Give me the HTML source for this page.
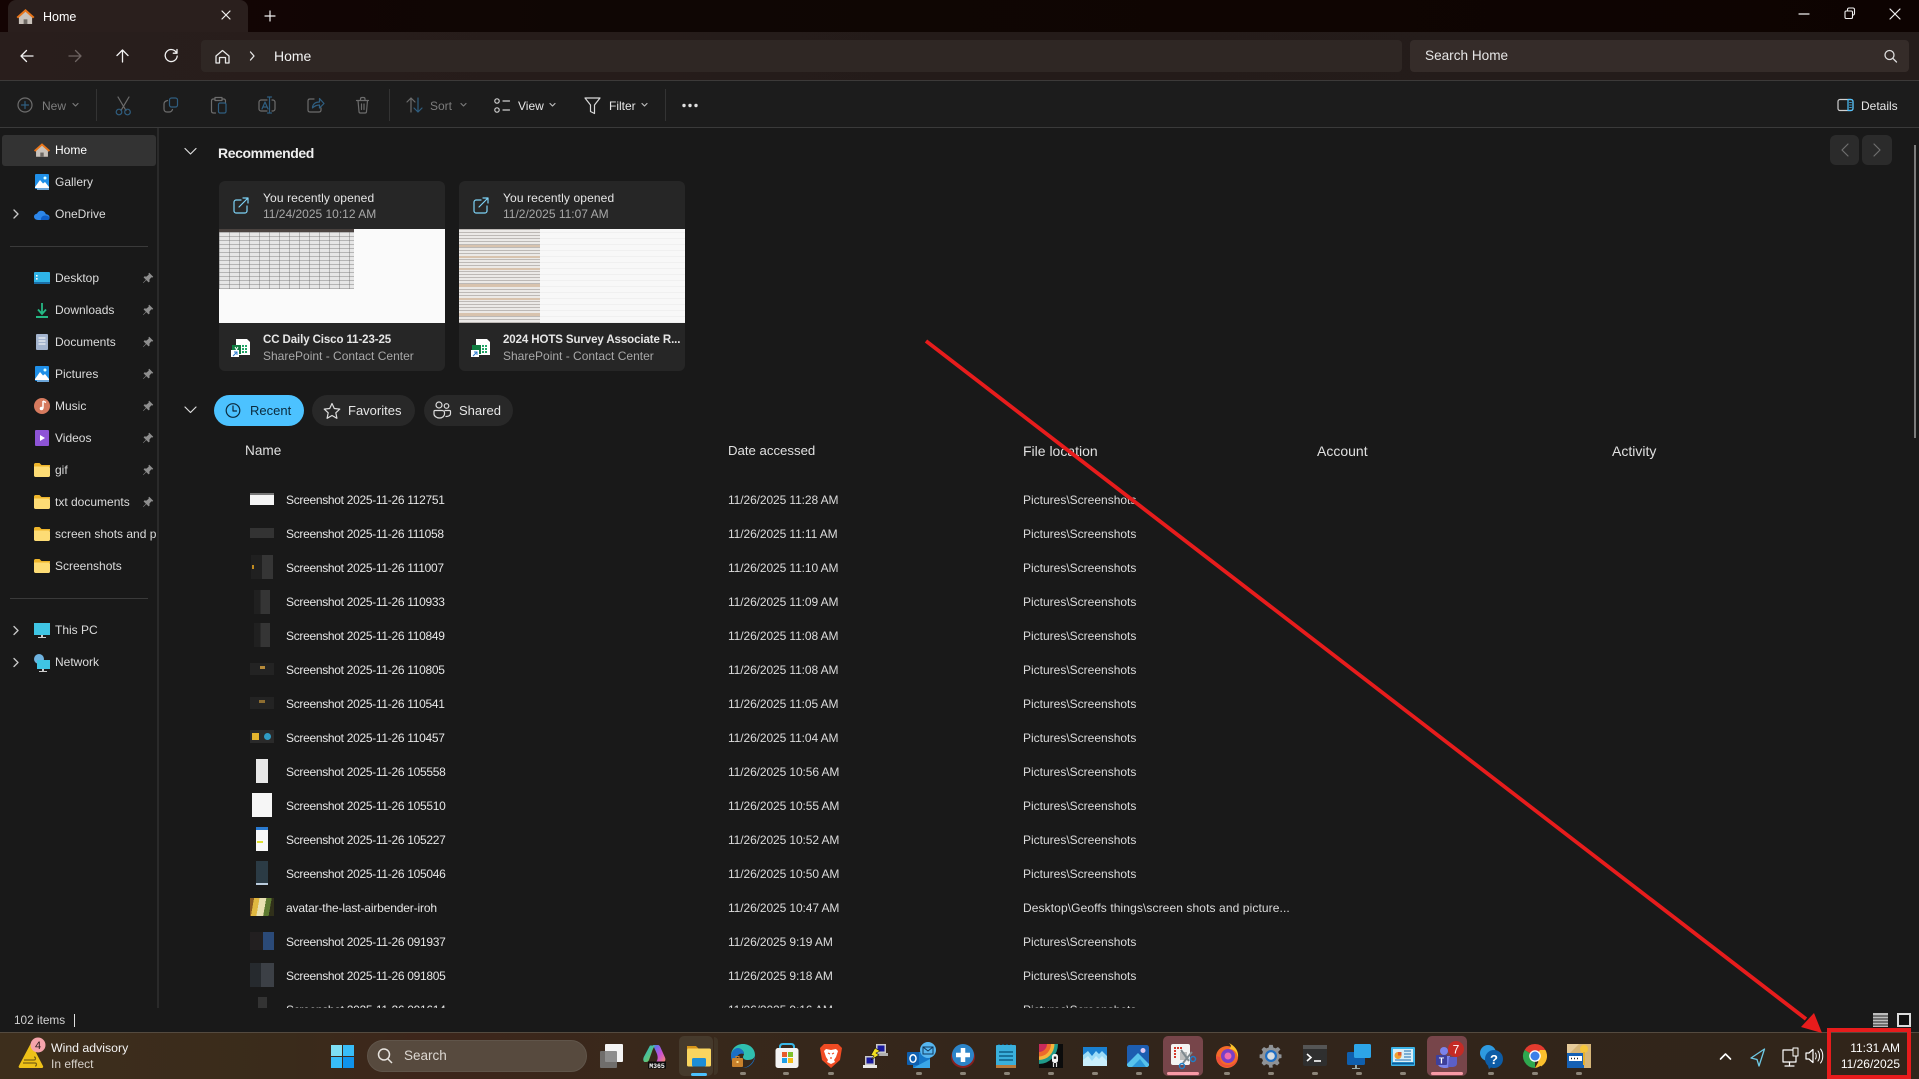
<!DOCTYPE html>
<html lang="en"><head><meta charset="utf-8"><title>Home - File Explorer</title>
<style>
html,body{margin:0;padding:0;background:#191919}
#r{position:relative;width:1919px;height:1079px;overflow:hidden;background:#191919;font-family:"Liberation Sans",sans-serif;font-size:12px;letter-spacing:0;color:#e6e6e6}
.b{position:absolute}
.t{position:absolute;height:16px;line-height:16px;white-space:nowrap}
.d{color:#7d7d7d;font-size:12px;letter-spacing:0}
.s{color:#dcdcdc}
.g{color:#a8a8a8}
#list{position:absolute;left:0;top:480px;width:1919px;height:528px;overflow:hidden}
#list .t{letter-spacing:-.3px}
#list .s{letter-spacing:0}
#list [style*="left:728px"]{letter-spacing:-.1px}
svg{position:absolute;left:0;top:0}
</style></head><body><div id="r">
<div class="b" style="left:0;top:0;width:1919px;height:32px;background:linear-gradient(90deg,#140403 0,#0f0604 30%,#0f0502 70%,#0d0301 100%)"></div>
<div class="b" style="left:0;top:32px;width:1919px;height:48px;background:linear-gradient(90deg,#291e1c,#241b19 50%,#241c1a)"></div>
<div class="b" style="left:8px;top:0;width:240px;height:32px;background:#2a1f1d;border-radius:8px 8px 0 0"></div>
<div class="b" style="left:201px;top:40px;width:1201px;height:32px;background:#2f2724;border-radius:4px"></div>
<div class="b" style="left:1410px;top:40px;width:499px;height:32px;background:#352c29;border-radius:4px"></div>
<div class="b" style="left:0;top:80px;width:1919px;height:48px;background:#1c1c1c;border-top:1px solid #3c3a39;border-bottom:1px solid #3a3a3a;box-sizing:border-box"></div>
<div class="b" style="left:96px;top:89px;width:1px;height:32px;background:#333"></div>
<div class="b" style="left:389px;top:89px;width:1px;height:32px;background:#333"></div>
<div class="b" style="left:665px;top:89px;width:1px;height:32px;background:#333"></div>
<div class="b" style="left:157px;top:128px;width:2px;height:880px;background:#2a2a2a"></div>
<div class="b" style="left:2px;top:135px;width:154px;height:31px;background:#333;border-radius:3px"></div>
<div class="b" style="left:10px;top:246px;width:138px;height:1px;background:#3a3a3a"></div>
<div class="b" style="left:10px;top:598px;width:138px;height:1px;background:#3a3a3a"></div>

<div class="t" style="left:43px;top:9px;font-size:12.5px;letter-spacing:0;font-weight:400;color:#fff">Home</div>
<div class="t" style="left:274px;top:48px;font-size:14px;letter-spacing:0;color:#f2f2f2">Home</div>
<div class="t" style="left:1425px;top:48px;font-size:13.6px;letter-spacing:0;color:#e6e6e6">Search Home</div>
<div class="t d" style="left:42px;top:98px">New</div>
<div class="t d" style="left:430px;top:98px">Sort</div>
<div class="t" style="left:518px;top:98px;font-size:12px;letter-spacing:0;color:#e6e6e6">View</div>
<div class="t" style="left:609px;top:98px;font-size:12px;letter-spacing:0;color:#e6e6e6">Filter</div>
<div class="t" style="left:1861px;top:98px;font-size:12px;letter-spacing:0;color:#e6e6e6">Details</div>

<div class="t s" style="left:55px;top:142px;color:#fff">Home</div>
<div class="t s" style="left:55px;top:174px">Gallery</div>
<div class="t s" style="left:55px;top:206px">OneDrive</div>
<div class="t s" style="left:55px;top:270px">Desktop</div>
<div class="t s" style="left:55px;top:302px">Downloads</div>
<div class="t s" style="left:55px;top:334px">Documents</div>
<div class="t s" style="left:55px;top:366px">Pictures</div>
<div class="t s" style="left:55px;top:398px">Music</div>
<div class="t s" style="left:55px;top:430px">Videos</div>
<div class="t s" style="left:55px;top:462px">gif</div>
<div class="t s" style="left:55px;top:494px">txt documents</div>
<div class="t s" style="left:55px;top:526px;width:101px;overflow:hidden">screen shots and pictures</div>
<div class="t s" style="left:55px;top:558px">Screenshots</div>
<div class="t s" style="left:55px;top:622px">This PC</div>
<div class="t s" style="left:55px;top:654px">Network</div>

<div class="t" style="left:218px;top:145px;font-size:14px;letter-spacing:-.4px;font-weight:700;color:#eee">Recommended</div>
<div class="b" style="left:219px;top:181px;width:226px;height:190px;background:#262626;border-radius:6px"></div>
<div class="b" style="left:459px;top:181px;width:226px;height:190px;background:#262626;border-radius:6px"></div>
<div class="t" style="left:263px;top:190px;letter-spacing:.12px;color:#e6e6e6">You recently opened</div>
<div class="t g" style="left:263px;top:206px">11/24/2025 10:12 AM</div>
<div class="t" style="left:503px;top:190px;letter-spacing:.12px;color:#e6e6e6">You recently opened</div>
<div class="t g" style="left:503px;top:206px">11/2/2025 11:07 AM</div>
<div class="b" style="left:219px;top:229px;width:226px;height:94px;background:#fafafa"></div>
<div class="b" style="left:219px;top:229px;width:135px;height:60px;background:repeating-linear-gradient(0deg,#b4b4b4 0 1px,#e6e6e6 1px 4px)"></div>
<div class="b" style="left:219px;top:229px;width:135px;height:60px;background:repeating-linear-gradient(90deg,rgba(110,110,110,.4) 0 1px,rgba(255,255,255,0) 1px 10px)"></div>
<div class="b" style="left:219px;top:229px;width:135px;height:3px;background:#4a4340"></div>
<div class="b" style="left:459px;top:229px;width:226px;height:94px;background:#f8f8f8"></div>
<div class="b" style="left:540px;top:229px;width:145px;height:94px;background:repeating-linear-gradient(0deg,#f0f0f0 0 1px,rgba(0,0,0,0) 1px 6px)"></div>
<div class="b" style="left:459px;top:229px;width:81px;height:94px;background:repeating-linear-gradient(0deg,#bdb9b6 0 1px,#ebe9e7 1px 3px)"></div>
<div class="b" style="left:459px;top:245px;width:81px;height:2px;background:#d8c3ae"></div>
<div class="b" style="left:459px;top:256px;width:81px;height:2px;background:#d8c3ae"></div>
<div class="b" style="left:459px;top:268px;width:81px;height:2px;background:#d8c3ae"></div>
<div class="b" style="left:459px;top:284px;width:81px;height:3px;background:#d8c3ae"></div>
<div class="b" style="left:459px;top:298px;width:81px;height:2px;background:#d8c3ae"></div>
<div class="b" style="left:459px;top:313px;width:81px;height:3px;background:#d8c3ae"></div>
<div class="t" style="left:263px;top:332px;font-weight:700;letter-spacing:-.1px;font-size:11.5px;color:#e6e6e6">CC Daily Cisco 11-23-25</div>
<div class="t g" style="left:263px;top:348px">SharePoint - Contact Center</div>
<div class="t" style="left:503px;top:332px;font-weight:700;letter-spacing:-.1px;font-size:11.5px;color:#e6e6e6;width:180px;overflow:hidden">2024 HOTS Survey Associate R...</div>
<div class="t g" style="left:503px;top:348px">SharePoint - Contact Center</div>

<div class="b" style="left:214px;top:395px;width:90px;height:31px;background:#4cc2ff;border-radius:16px"></div>
<div class="b" style="left:312px;top:395px;width:103px;height:31px;background:#282828;border-radius:16px"></div>
<div class="b" style="left:424px;top:395px;width:89px;height:31px;background:#282828;border-radius:16px"></div>
<div class="t" style="left:250px;top:403px;font-size:13px;letter-spacing:0;color:#0a2a3c">Recent</div>
<div class="t" style="left:348px;top:403px;font-size:13px;letter-spacing:0;color:#e6e6e6">Favorites</div>
<div class="t" style="left:459px;top:403px;font-size:13px;letter-spacing:0;color:#e6e6e6">Shared</div>

<div class="t" style="left:245px;top:443px;font-size:13.6px;letter-spacing:0;color:#e0e0e0">Name</div>
<div class="t" style="left:728px;top:443px;font-size:13.2px;letter-spacing:0;color:#e0e0e0">Date accessed</div>
<div class="t" style="left:1023px;top:443px;font-size:14px;letter-spacing:0;color:#e0e0e0">File location</div>
<div class="t" style="left:1317px;top:443px;font-size:14px;letter-spacing:0;color:#e0e0e0">Account</div>
<div class="t" style="left:1612px;top:443px;font-size:14px;letter-spacing:0;color:#e0e0e0">Activity</div>

<div id="list">
<div class="b" style="left:250px;top:13px;width:24px;height:12px;background:#f4f4f4"></div><div class="b" style="left:250px;top:13px;width:24px;height:2px;background:#777"></div><div class="t" style="left:286px;top:12px">Screenshot 2025-11-26 112751</div><div class="t s" style="left:728px;top:12px">11/26/2025 11:28 AM</div><div class="t s" style="left:1023px;top:12px">Pictures\Screenshots</div>
<div class="b" style="left:250px;top:48px;width:24px;height:10px;background:#333"></div><div class="t" style="left:286px;top:46px">Screenshot 2025-11-26 111058</div><div class="t s" style="left:728px;top:46px">11/26/2025 11:11 AM</div><div class="t s" style="left:1023px;top:46px">Pictures\Screenshots</div>
<div class="b" style="left:251px;top:75px;width:22px;height:24px;background:linear-gradient(90deg,#202020 50%,#353535 50%)"></div><div class="b" style="left:252px;top:85px;width:2px;height:4px;background:#c08a20"></div><div class="t" style="left:286px;top:80px">Screenshot 2025-11-26 111007</div><div class="t s" style="left:728px;top:80px">11/26/2025 11:10 AM</div><div class="t s" style="left:1023px;top:80px">Pictures\Screenshots</div>
<div class="b" style="left:254px;top:110px;width:16px;height:24px;background:linear-gradient(90deg,#202020 40%,#353535 40%)"></div><div class="t" style="left:286px;top:114px">Screenshot 2025-11-26 110933</div><div class="t s" style="left:728px;top:114px">11/26/2025 11:09 AM</div><div class="t s" style="left:1023px;top:114px">Pictures\Screenshots</div>
<div class="b" style="left:254px;top:143px;width:16px;height:24px;background:linear-gradient(90deg,#202020 40%,#353535 40%)"></div><div class="t" style="left:286px;top:148px">Screenshot 2025-11-26 110849</div><div class="t s" style="left:728px;top:148px">11/26/2025 11:08 AM</div><div class="t s" style="left:1023px;top:148px">Pictures\Screenshots</div>
<div class="b" style="left:250px;top:183px;width:24px;height:12px;background:#232323"></div><div class="b" style="left:260px;top:186px;width:5px;height:3px;background:#b58a3a"></div><div class="t" style="left:286px;top:182px">Screenshot 2025-11-26 110805</div><div class="t s" style="left:728px;top:182px">11/26/2025 11:08 AM</div><div class="t s" style="left:1023px;top:182px">Pictures\Screenshots</div>
<div class="b" style="left:250px;top:217px;width:24px;height:12px;background:#232323"></div><div class="b" style="left:259px;top:220px;width:6px;height:3px;background:#8d6d30"></div><div class="t" style="left:286px;top:216px">Screenshot 2025-11-26 110541</div><div class="t s" style="left:728px;top:216px">11/26/2025 11:05 AM</div><div class="t s" style="left:1023px;top:216px">Pictures\Screenshots</div>
<div class="b" style="left:250px;top:250px;width:24px;height:13px;background:#2a2a2a"></div><div class="b" style="left:252px;top:253px;width:7px;height:7px;background:#e6b62e"></div><div class="b" style="left:264px;top:253px;width:7px;height:7px;background:#2f9bc4;border-radius:50%"></div><div class="t" style="left:286px;top:250px">Screenshot 2025-11-26 110457</div><div class="t s" style="left:728px;top:250px">11/26/2025 11:04 AM</div><div class="t s" style="left:1023px;top:250px">Pictures\Screenshots</div>
<div class="b" style="left:256px;top:279px;width:12px;height:24px;background:#e8e8e8"></div><div class="t" style="left:286px;top:284px">Screenshot 2025-11-26 105558</div><div class="t s" style="left:728px;top:284px">11/26/2025 10:56 AM</div><div class="t s" style="left:1023px;top:284px">Pictures\Screenshots</div>
<div class="b" style="left:252px;top:313px;width:20px;height:24px;background:#f6f6f6"></div><div class="t" style="left:286px;top:318px">Screenshot 2025-11-26 105510</div><div class="t s" style="left:728px;top:318px">11/26/2025 10:55 AM</div><div class="t s" style="left:1023px;top:318px">Pictures\Screenshots</div>
<div class="b" style="left:256px;top:347px;width:12px;height:24px;background:#f8f8f8"></div><div class="b" style="left:256px;top:347px;width:12px;height:3px;background:#2a7ad0"></div><div class="b" style="left:257px;top:361px;width:6px;height:2px;background:#dfe030"></div><div class="t" style="left:286px;top:352px">Screenshot 2025-11-26 105227</div><div class="t s" style="left:728px;top:352px">11/26/2025 10:52 AM</div><div class="t s" style="left:1023px;top:352px">Pictures\Screenshots</div>
<div class="b" style="left:256px;top:381px;width:12px;height:24px;background:#2b3b45"></div><div class="b" style="left:256px;top:403px;width:12px;height:2px;background:#bcd"></div><div class="t" style="left:286px;top:386px">Screenshot 2025-11-26 105046</div><div class="t s" style="left:728px;top:386px">11/26/2025 10:50 AM</div><div class="t s" style="left:1023px;top:386px">Pictures\Screenshots</div>
<div class="b" style="left:250px;top:418px;width:24px;height:18px;background:linear-gradient(100deg,#8a5a20 0 15%,#e0b840 15% 35%,#e8e0b0 35% 60%,#5d7a30 60% 80%,#30301a 80%)"></div><div class="t" style="left:286px;top:420px;letter-spacing:-.15px">avatar-the-last-airbender-iroh</div><div class="t s" style="left:728px;top:420px">11/26/2025 10:47 AM</div><div class="t s" style="left:1023px;top:420px;letter-spacing:.1px">Desktop\Geoffs things\screen shots and picture...</div>
<div class="b" style="left:250px;top:452px;width:24px;height:18px;background:linear-gradient(90deg,#221f20 55%,#2b4a78 55%)"></div><div class="t" style="left:286px;top:454px">Screenshot 2025-11-26 091937</div><div class="t s" style="left:728px;top:454px">11/26/2025 9:19 AM</div><div class="t s" style="left:1023px;top:454px">Pictures\Screenshots</div>
<div class="b" style="left:250px;top:483px;width:24px;height:24px;background:linear-gradient(90deg,#262a2e 45%,#3c4046 45%)"></div><div class="t" style="left:286px;top:488px">Screenshot 2025-11-26 091805</div><div class="t s" style="left:728px;top:488px">11/26/2025 9:18 AM</div><div class="t s" style="left:1023px;top:488px">Pictures\Screenshots</div>
<div class="b" style="left:258px;top:517px;width:9px;height:24px;background:#333"></div><div class="t" style="left:286px;top:522px">Screenshot 2025-11-26 091614</div><div class="t s" style="left:728px;top:522px">11/26/2025 9:16 AM</div><div class="t s" style="left:1023px;top:522px">Pictures\Screenshots</div>
</div>

<div class="t" style="left:14px;top:1012px;font-size:11.8px;color:#d2d2d2">102 items</div>
<div class="b" style="left:74px;top:1014px;width:1px;height:13px;background:#e0e0e0"></div>

<div class="b" style="left:0;top:1032px;width:1919px;height:47px;box-sizing:border-box;border-top:1px solid #544a3f;background:linear-gradient(90deg,#3d2e1c 0,#3a2b1b 15%,#3d261b 22%,#38281b 35%,#32251b 60%,#31251a 100%)"></div>
<div class="b" style="left:367px;top:1040px;width:220px;height:32px;background:#574a3e;border-radius:16px;box-sizing:border-box;border:1px solid #60554a"></div>
<div class="b" style="left:679px;top:1036px;width:34px;height:40px;background:#463a2c;border-radius:5px"></div>
<div class="b" style="left:714px;top:1037px;width:4px;height:38px;background:#403426;border-radius:0 4px 4px 0"></div>
<div class="b" style="left:1163px;top:1036px;width:40px;height:40px;background:#77454a;border-radius:5px"></div>
<div class="b" style="left:1427px;top:1036px;width:40px;height:40px;background:#77454a;border-radius:5px"></div>
<div class="t" style="left:51px;top:1040px;font-size:12.3px;letter-spacing:0;color:#f4f4f4">Wind advisory</div>
<div class="t" style="left:51px;top:1056px;font-size:12px;letter-spacing:0;color:#d5d0ca">In effect</div>
<div class="t" style="left:404px;top:1048px;font-size:13.5px;letter-spacing:0;color:#ddd8d2">Search</div>
<div class="t" style="left:1800px;top:1040px;width:100px;text-align:right;font-size:12px;letter-spacing:0;color:#fff">11:31 AM</div>
<div class="t" style="left:1800px;top:1056px;width:100px;text-align:right;font-size:12px;letter-spacing:0;color:#fff">11/26/2025</div>

<svg width="1919" height="1079" viewBox="0 0 1919 1079" fill="none">
<defs>
<symbol id="home" viewBox="0 0 20 18"><path d="M3 9v8h14V9L10 3z" fill="#c9c2bb"/><path d="M8 17v-5h4v5z" fill="#6f6a65"/><path d="M0.5 9.5 10 1l9.500 8.500-1.600 1.500L10 4 2.100 11z" fill="#e8751a"/></symbol>
<symbol id="pin" viewBox="0 0 12 12"><path d="M7.200.8 11.200 4.800 10.300 5.600 9.400 5.200 7.400 7.600 7.600 9.600 6.600 10.400 4.300 8.100 1.400 11 1 10.600 3.900 7.700 1.600 5.400 2.400 4.400 4.400 4.600 6.800 2.600 6.400 1.700z" fill="#8e8e8e"/></symbol>
<symbol id="folder" viewBox="0 0 16 16"><path d="M0 2.500C0 1.700.7 1 1.500 1h4L7.500 3H16v2H0z" fill="#eeb52b"/><path d="M0 4.500h14.500c.8 0 1.500.7 1.500 1.500v7.500c0 .8-.7 1.500-1.500 1.500h-13C.7 15 0 14.300 0 13.500z" fill="#fddc75"/></symbol>
<symbol id="pic" viewBox="0 0 16 16"><rect x="1" y="0" width="14" height="15" rx="1" fill="#1f8fe8"/><rect x="3" y="14" width="12" height="2" fill="#6ba5d8"/><path d="M1 13 6 6l3 3.500 2-1.500 4 5v1H1z" fill="#fff"/><circle cx="11" cy="4" r="1.500" fill="#dff"/></symbol>
<symbol id="gear" viewBox="0 0 24 24"><path d="M10 1h4l.7 3 2.600 1 2.700-1.600 2.800 2.800L20.200 9l1 2.600 2.800.4v4l-2.800.6-1 2.400 1.600 2.800-2.800 2.800-2.700-1.700-2.600 1L14 27h-4l-.7-3-2.600-1-2.700 1.700-2.800-2.800L2.800 19l-1-2.400L-1 16v-4l2.800-.4 1-2.600-1.600-2.800 2.800-2.800 2.700 1.600 2.600-1z" transform="translate(1.500 0) scale(.875)" fill="#8f9397"/><circle cx="12" cy="12" r="6" fill="#1f6fc4"/><circle cx="12" cy="12" r="3.800" fill="#d8dde0"/></symbol>
<linearGradient id="cp1" x1="0" x2="1" y1="0" y2="1"><stop offset="0" stop-color="#1fb6d8"/><stop offset="1" stop-color="#8ccf3c"/></linearGradient>
<linearGradient id="cp2" x1="0" x2="1" y1="0" y2="1"><stop offset="0" stop-color="#3a7ff0"/><stop offset=".55" stop-color="#c850d8"/><stop offset="1" stop-color="#f58a70"/></linearGradient>
</defs>

<!-- title bar -->
<use href="#home" x="16" y="8" width="19" height="17"/>
<g stroke="#f0f0f0" stroke-width="1.200" stroke-linecap="round">
<path d="M222 11l8 8M230 11l-8 8M270 11v10M265 16h10"/>
<path d="M1799 14h10"/>
<path d="M1890 9l10 10M1900 9l-10 10"/>
</g>
<g stroke="#f0f0f0" stroke-width="1.100" fill="none"><rect x="1845" y="11" width="7.500" height="7.500" rx="1.200"/><path d="M1847.500 11V9.500c0-.8.7-1.500 1.500-1.500h4c.8 0 1.500.7 1.500 1.500v4c0 .8-.7 1.500-1.500 1.500h-.5"/></g>

<!-- nav -->
<g stroke-width="1.300" fill="none" stroke-linecap="round" stroke-linejoin="round">
<path d="M33 56H21M26.500 50.500 21 56l5.500 5.500" stroke="#f2f2f2"/>
<path d="M69 56h12M75.500 50.500 81 56l-5.500 5.500" stroke="#6e6462"/>
<path d="M122.500 62V50M117 55.500l5.500-5.500 5.500 5.500" stroke="#f2f2f2"/>
<path d="M176.500 52.700A6 6 0 1 0 177.200 56M177 49.500v3.700h-3.700" stroke="#f2f2f2"/>
<path d="M216 62.500v-7l6.500-5.500 6.500 5.500v7h-3.500V57h-6v5.500z" stroke="#e8e8e8" transform="translate(0 .5)"/>
<path d="M250.500 52l3.500 4-3.500 4" stroke="#e8e8e8"/>
<circle cx="1889.500" cy="55" r="4.500" stroke="#ddd"/><path d="M1893 58.500l3.500 3.500" stroke="#ddd"/>
</g>

<!-- toolbar -->
<g fill="none" stroke-width="1.200" stroke-linecap="round" stroke-linejoin="round">
<circle cx="25" cy="105" r="7" stroke="#6c6c6c"/><path d="M25 101.500v7M21.500 105h7" stroke="#2f5e80"/>
<path d="M73 103.500l2.500 2.500 2.500-2.500" stroke="#7a7a7a"/>
<path d="M118 97l8 13.500M129 97l-8 13.500" stroke="#6c6c6c"/><circle cx="119" cy="112" r="2.800" stroke="#2f5e80"/><circle cx="127.500" cy="112" r="2.800" stroke="#2f5e80"/>
<rect x="169.500" y="98" width="8" height="9" rx="2" stroke="#2f5e80"/><path d="M167.500 100.500c-2 .5-3.500 1.500-3.500 3.500v5c0 1.500 1 3 3 3h2c2 0 3-1 3.500-2.500" stroke="#6c6c6c"/>
<path d="M215 99h-1.500c-1.500 0-2 1-2 2v10c0 1.500 1 2 2 2h2M222 99h1.500c1 0 2 .5 2 2v1.500M215 97.500h7V100.500h-7z" stroke="#6c6c6c"/><rect x="218.500" y="103" width="7.500" height="10" rx="1.500" stroke="#2f5e80"/>
<path d="M267 100h-6c-1 0-2 1-2 2v7c0 1 1 2 2 2h6M272 100h1c1 0 2 1 2 2v7c0 1-1 2-2 2h-1" stroke="#6c6c6c"/><path d="M269.500 97v16M267.500 97h4M267.500 113h4M262 109l3-7 3 7M263 107h4" stroke="#2f5e80"/>
<path d="M314 99h-4c-1 0-2 .5-2 2v9c0 1 .5 2 2 2h9c1.500 0 2-1 2-2v-2" stroke="#6c6c6c"/><path d="M312.500 108c0-4 3-6 7-6V98.500l4.500 5-4.500 4.500v-3c-3 0-5 1-7 3z" stroke="#2f5e80"/>
<path d="M356.500 100.500h12M360.500 100.500v-1.500c0-1 .5-1.500 1.500-1.500h1.500c1 0 1.500.5 1.500 1.500v1.500M358 100.500l1 11c0 1 .5 1.500 1.500 1.500h4.500c1 0 1.500-.5 1.500-1.500l1-11M361.500 104v5.500M364 104v5.500" stroke="#6c6c6c"/>
<path d="M411 112V98M407 102l4-4 4 4" stroke="#6c6c6c"/><path d="M418 98v14M414 108l4 4 4-4" stroke="#2f5e80"/>
<path d="M461 103.500l2.500 2.500 2.500-2.500" stroke="#7a7a7a"/>
<circle cx="497" cy="101" r="2.200" stroke="#cfcfcf"/><circle cx="497" cy="110" r="2.200" stroke="#cfcfcf"/><path d="M503 101h6.500M503 110h6.500" stroke="#cfcfcf"/>
<path d="M550 103.500l2.500 2.500 2.500-2.500" stroke="#bbb"/>
<path d="M585 98h15l-5.500 7v8.500l-4-2V105z" stroke="#d8d8d8"/>
<path d="M642 103.500l2.500 2.500 2.500-2.500" stroke="#bbb"/>
<rect x="1838" y="99.500" width="15" height="11" rx="2" stroke="#cfcfcf"/><path d="M1848 99.500h3c1 0 2 1 2 2v7c0 1-1 2-2 2h-3z" stroke="#4cc2ff"/><path d="M1849.500 102.500h2M1849.500 105h2M1849.500 107.500h2" stroke="#4cc2ff" stroke-width=".8"/>
<path d="M185 148.500l5.500 5.500 5.500-5.500M185 407l5.500 5.500 5.500-5.500" stroke="#dcdcdc"/>
<path d="M14 210l4 4-4 4M14 626.500l4 4-4 4M14 658.500l4 4-4 4" stroke="#c8c8c8" stroke-width="1.300"/>
<path d="M241 200h-5c-1 0-2 1-2 2v9c0 1 1 2 2 2h9c1 0 2-1 2-2v-5M239 207l8.500-8.500M243 198h5v5" stroke="#7ed3f7"/>
<path d="M481 200h-5c-1 0-2 1-2 2v9c0 1 1 2 2 2h9c1 0 2-1 2-2v-5M479 207l8.500-8.500M483 198h5v5" stroke="#7ed3f7"/>
<circle cx="233" cy="410.500" r="6.800" stroke="#0c2a3c"/><path d="M233 406v5h3.500" stroke="#0c2a3c"/>
<path d="M332 403.500l2.300 5 5.500.6-4 3.700 1.100 5.500-4.900-2.800-4.900 2.800 1.100-5.500-4-3.700 5.500-.6z" stroke="#ddd" stroke-width="1.200"/>
<circle cx="439" cy="405" r="3" stroke="#ddd"/><circle cx="446.500" cy="406" r="2.300" stroke="#ddd"/><path d="M435 410.500h7c1.500 0 2.500 1 2.500 2v1.500c0 2-2 4-5 4s-5.500-2-5.500-4v-2.500c0-.5.500-1 1-1zM445 410.500h4.500c.5 0 1 .5 1 1v2c0 2-2 3-4.500 3" stroke="#ddd"/>
<rect x="1830" y="135" width="29" height="30" rx="6" fill="#2b2b2b" stroke="none"/><rect x="1862" y="135" width="30" height="30" rx="6" fill="#2b2b2b" stroke="none"/>
<path d="M1848 144l-6 6 6 6" stroke="#6e6e6e"/><path d="M1874 144l6 6-6 6" stroke="#6e6e6e"/>
</g>
<circle cx="684" cy="105.500" r="1.700" fill="#e0e0e0"/><circle cx="690" cy="105.500" r="1.700" fill="#e0e0e0"/><circle cx="696" cy="105.500" r="1.700" fill="#e0e0e0"/>
<rect x="1914" y="145" width="2" height="293" fill="#7c7c7c"/>

<!-- sidebar icons -->
<use href="#home" x="33.500" y="142" width="17" height="16"/>
<g transform="translate(34 174)"><use href="#pic" width="16" height="16"/></g>
<path d="M38 220c-2 0-4-1.300-4-3.200 0-1.800 1.400-3 3-3 .8-2 2.500-3 4.300-3 2.300 0 4 1.400 4.500 3.400 2 0 3.700 1.200 3.700 3 0 2-1.600 2.800-3.500 2.800z" fill="#2d87ea"/><path d="M41 220c-.5-2.500 1.500-4.500 4-4.500 2 0 4.500 1 4.500 3 0 1-1 1.500-2 1.500z" fill="#0f5fc9"/>
<rect x="34" y="272" width="16" height="12" rx="1" fill="#2fb4e8"/><rect x="34" y="282" width="16" height="2" fill="#1a6fa8"/><rect x="36" y="275" width="1.600" height="1.600" fill="#fff"/><rect x="36" y="278" width="1.600" height="1.600" fill="#fff"/>
<path d="M42 303v11M38 309.500l4 4.500 4-4.500" stroke="#25b884" stroke-width="1.800" fill="none"/><rect x="36" y="316" width="12" height="2" fill="#25b884"/>
<rect x="36" y="334" width="12" height="16" rx="1" fill="#a3b4ce"/><path d="M38.500 338h7M38.500 341h7M38.500 344h7" stroke="#fff"/>
<g transform="translate(34 366)"><use href="#pic" width="16" height="16"/></g>
<circle cx="42" cy="406" r="8" fill="#d67a5e"/><path d="M43 401v7.500" stroke="#fff" stroke-width="1.500"/><circle cx="41.500" cy="408.500" r="1.800" fill="#fff"/><path d="M43 401l3 1.500" stroke="#fff" stroke-width="1.500"/>
<rect x="35" y="430" width="14" height="16" rx="1" fill="#8e54d6"/><path d="M40 435v6l5-3z" fill="#fff"/>
<use href="#folder" x="34" y="462" width="16" height="16"/>
<use href="#folder" x="34" y="494" width="16" height="16"/>
<use href="#folder" x="34" y="526" width="16" height="16"/>
<use href="#folder" x="34" y="558" width="16" height="16"/>
<rect x="34" y="623" width="16" height="12" fill="#3fc5e4"/><rect x="41" y="635" width="2" height="2" fill="#ccc"/><rect x="38" y="637" width="8" height="1" fill="#ccc"/>
<circle cx="39" cy="659" r="5" fill="#6fb3e0"/><rect x="37" y="660" width="13" height="9" fill="#3fc5e4"/><rect x="42" y="669" width="2" height="2" fill="#ccc"/><rect x="39" y="671" width="8" height="1" fill="#ccc"/>
<use href="#pin" x="142" y="272" width="12" height="12"/><use href="#pin" x="142" y="304" width="12" height="12"/><use href="#pin" x="142" y="336" width="12" height="12"/><use href="#pin" x="142" y="368" width="12" height="12"/><use href="#pin" x="142" y="400" width="12" height="12"/><use href="#pin" x="142" y="432" width="12" height="12"/><use href="#pin" x="142" y="464" width="12" height="12"/><use href="#pin" x="142" y="496" width="12" height="12"/>

<!-- excel icons -->
<g><path d="M236 339h11l3 3v13h-14z" fill="#fff"/><rect x="232" y="345" width="9" height="9" fill="#107c41"/><path d="M242 345h2v2h-2zm3 0h2v2h-2zm-3 3h2v2h-2zm3 0h2v2h-2zm-3 3h2v2h-2zm3 0h2v2h-2z" fill="#21a366"/><path d="M235 347l3 5M238 347l-3 5" stroke="#fff"/><rect x="231" y="350" width="8" height="7" fill="#fff"/><path d="M233 356l4-4M234 352h3v3" stroke="#2a7ad0"/></g>
<g transform="translate(240 0)"><path d="M236 339h11l3 3v13h-14z" fill="#fff"/><rect x="232" y="345" width="9" height="9" fill="#107c41"/><path d="M242 345h2v2h-2zm3 0h2v2h-2zm-3 3h2v2h-2zm3 0h2v2h-2zm-3 3h2v2h-2zm3 0h2v2h-2z" fill="#21a366"/><rect x="231" y="350" width="8" height="7" fill="#fff"/><path d="M233 356l4-4M234 352h3v3" stroke="#2a7ad0"/></g>

<!-- status view icons -->
<rect x="1873" y="1013" width="15" height="14" fill="#bdbdbd"/><path d="M1873 1016h15M1873 1019h15M1873 1022h15M1873 1025h15" stroke="#222"/>
<rect x="1897" y="1013" width="14" height="14" fill="#dcdcdc"/><rect x="1899" y="1015" width="10" height="10" fill="#111"/>

<!-- weather -->
<path d="M31 1043 43 1066c.5 1-.2 2-1.200 2H20c-1 0-1.700-1-1.200-2z" fill="#eec118"/><path d="M24 1060h10c2 0 2-3 0-3M23 1063h12c2 0 2 3 0 3" stroke="#7d6412" stroke-width="1.200"/>
<circle cx="38" cy="1045" r="7.500" fill="#f5a4ab"/><text x="38" y="1049" text-anchor="middle" font-size="11" fill="#2a1a1a" font-family="Liberation Sans">4</text>

<!-- start -->
<path d="M331 1045h11v11h-11zM343 1045h11v11h-11zM331 1057h11v11h-11zM343 1057h11v11h-11z" fill="#38bdf8"/><path d="M343 1057h11v11h-11z" fill="#0f93ec"/><path d="M331 1045h11v11h-11z" fill="#7fe0f5"/>
<circle cx="384" cy="1054.500" r="5.500" stroke="#e8e4df" stroke-width="1.500" fill="none"/><path d="M388 1059l4 4" stroke="#e8e4df" stroke-width="1.500"/>
<!-- task view -->
<rect x="605" y="1044" width="18" height="18" rx="1" fill="#f4f4f4"/><rect x="600" y="1051" width="17" height="17" rx="1" fill="#7a7a7a" opacity=".85"/>

<!-- m365 -->
<g transform="translate(643 1044)"><path d="M10 1h5c1 0 2 1 2.500 2.500l4.500 10c1 2.500 0 4.500-2 4.500h-7c2-2 2-5 1-8z" fill="url(#cp2)"/><path d="M7 1.500h6c-2 1-3 3-4 6l-3 8.500c-.7 1.500-1.500 2-3 2H1.500c-1.500-1-1.500-3-.7-5z" fill="url(#cp1)"/><rect x="5" y="17.500" width="18" height="7" fill="#0b0b0b"/><text x="14" y="23.800" text-anchor="middle" font-family="Liberation Mono" font-size="6.500" font-weight="700" fill="#fff">M365</text></g>
<!-- explorer -->
<g transform="translate(687 1044)"><path d="M0 2h9l3 3h-12z" fill="#d6941a"/><rect x="0" y="4.500" width="24" height="18" rx="1.500" fill="#f9d55f"/><rect x="5" y="14" width="14" height="8.500" rx="1.500" fill="#1d8ed6"/></g>
<rect x="691" y="1073" width="16" height="3" rx="1.500" fill="#4cc2ff"/>
<!-- edge -->
<g transform="translate(731 1044)"><path d="M12 0c7 0 12 5 12 11 0 3-3 5-7 5-3 0-5-1-5-3 0-1 1-2 1-3C13 7 10 4 6 5 2 6 0 10 0 12 0 5 5 0 12 0z" fill="#2fbfae"/><path d="M0 12c0-4 3-8 7-8 3 0 6 3 6 6-3-1-6 0-7 3-1 3 0 7 4 10C4 23 0 18 0 12z" fill="#1a6fc4"/><path d="M24 12c0 6-5 12-12 12 5-1 10-4 12-12z" fill="#1a6fc4"/><rect x="1" y="14" width="11" height="9" rx="1" fill="#c9812c"/><rect x="5" y="12.500" width="3" height="2" fill="none" stroke="#c9812c"/><rect x="5.500" y="17" width="2" height="2" fill="#ffdf8a"/></g>
<!-- store -->
<g transform="translate(775 1043)"><path d="M5 6V4c0-2 1-3 3-3h8c2 0 3 1 3 3v2" stroke="#3ab8e8" stroke-width="2" fill="none"/><rect x="0.500" y="5" width="23" height="20" rx="2.500" fill="#f4f4f4"/><rect x="7" y="9" width="5" height="5" fill="#e85b2c"/><rect x="13" y="9" width="5" height="5" fill="#7ec02c"/><rect x="7" y="15" width="5" height="5" fill="#1d9fe8"/><rect x="13" y="15" width="5" height="5" fill="#f4bc18"/></g>
<!-- brave -->
<g transform="translate(819 1043)"><path d="M5 1h14l4 4-2 12-9 8-9-8L1 5z" fill="#f04b23"/><path d="M7 6l5 1 5-1 2 2-2 6-2 3 1 2-4 2-4-2 1-2-2-3-2-6z" fill="#fff"/><path d="M9 10l2 1M15 10l-2 1M11 15h2" stroke="#f04b23" stroke-width="1.200"/></g>
<!-- putty -->
<g transform="translate(863 1044)"><rect x="13" y="0" width="10" height="9" fill="#c9c9c9"/><rect x="14.500" y="1.500" width="7" height="6" fill="#1a1aa0"/><rect x="13" y="9" width="12" height="3" fill="#b0b0b0"/><rect x="2" y="12" width="10" height="9" fill="#c9c9c9"/><rect x="3.500" y="13.500" width="7" height="6" fill="#1a1aa0"/><rect x="0" y="21" width="14" height="3" fill="#e8e8e8"/><path d="M12 4l5 3-4 2 3 2-8 5 3-4-3-1z" fill="#f2e020" stroke="#111" stroke-width=".6"/></g>
<!-- outlook -->
<g transform="translate(907 1044)"><path d="M6 8h17v16H6z" fill="#1578c9"/><path d="M6 24l17-9v9z" fill="#3aa7e8"/><rect x="0" y="8" width="12" height="13" rx="1" fill="#0f5fae"/><ellipse cx="6" cy="14.500" rx="3" ry="3.800" stroke="#fff" stroke-width="1.500" fill="none"/><circle cx="21" cy="6" r="8" fill="#56b6f0"/><rect x="16" y="3" width="10" height="7" fill="none" stroke="#10385c"/><path d="M16 3l5 4 5-4" stroke="#10385c" fill="none"/></g>
<!-- plus -->
<g transform="translate(951 1044)"><ellipse cx="12" cy="13" rx="12" ry="11" fill="#8a1f1f"/><circle cx="12" cy="11" r="11" fill="#2c84c8"/><path d="M12 4v14M5 11h14" stroke="#fff" stroke-width="4.500"/></g>
<!-- notepad -->
<g transform="translate(995 1044)"><rect x="1" y="1" width="20" height="23" rx="1" fill="#3ab0dc"/><rect x="1" y="21" width="20" height="3" fill="#b87a3c"/><path d="M4 1v-1M8 1v-1M12 1v-1M16 1v-1M4 8h14M4 12h14M4 16h14" stroke="#0d5f86" stroke-width="1.500"/></g>
<!-- abstract -->
<g transform="translate(1039 1044)"><rect width="24" height="24" fill="#0c0c0c"/><path d="M0 0H19A19 20 0 0 1 0 20z" fill="#1f9a8a"/><path d="M0 0H15.500A15.500 16 0 0 1 0 16z" fill="#f4b43a"/><path d="M0 0H12A12 12.500 0 0 1 0 12.500z" fill="#ec6a2a"/><path d="M0 0H8A8 8 0 0 1 0 8z" fill="#c82a5a"/><rect x="13" y="10" width="6" height="9" fill="#f4f4f4" rx="2.500"/><rect x="14.800" y="12.500" width="2.400" height="2.400" fill="#222"/><path d="M14.500 19v4M17.500 19v4" stroke="#ddd" stroke-width="1.200"/></g>
<!-- waves -->
<g transform="translate(1083 1047)"><rect width="24" height="19" fill="#1a80d0"/><path d="M0 8 5 4l4 5 4-5 3 3 3-3 5 5v10H0z" fill="#9bdcf8"/><path d="M0 13 5 9l4 5 4-5 3 3 3-3 5 5v5H0z" fill="#c9eefc"/></g>
<!-- photos -->
<g transform="translate(1127 1045)"><rect width="22" height="22" rx="2.500" fill="#1d5db0"/><path d="M0 19 11 8l11 11v1c0 1-1 2-2 2H2c-1 0-2-1-2-2z" fill="#57c3ec"/><path d="M5 22l8-8 6 8z" fill="#2b96d8"/><circle cx="16" cy="5.500" r="2.500" fill="#e0c8f0"/></g>
<!-- snip -->
<g transform="translate(1171 1044)"><rect x="0" y="0" width="19" height="21" rx="2" fill="#f4f4f4"/><path d="M3 3h2v2H3zM6 3h2v2H6zM9 3h2v2H9zM3 6h2v2H3zM3 9h2v2H3zM3 12h2v2H3z" fill="#d63a2e"/><path d="M9 8h7v8H9z" fill="#bdbdbd"/><path d="M10 6l8 11M21 8 12 19" stroke="#7f8a90" stroke-width="2"/><circle cx="11" cy="22" r="2.500" stroke="#1f7fc9" stroke-width="1.500" fill="none"/><circle cx="22" cy="15" r="2.500" stroke="#1f7fc9" stroke-width="1.500" fill="none"/></g>
<rect x="1167" y="1072" width="32" height="3" rx="1.500" fill="#f89aa6"/>
<!-- firefox -->
<g transform="translate(1215 1043)"><circle cx="12" cy="14" r="11" fill="#f46a2a"/><path d="M14 0c6 3 10 8 9 15C22 8 18 6 14 6c3-2 2-4 0-6z" fill="#fcc22a"/><circle cx="13" cy="13" r="7" fill="#7a3fc6"/><circle cx="13" cy="13" r="3.500" fill="#f26cab"/><path d="M1 13c0 6 5 11 11 11 7 0 11-5 11-10-1 5-5 8-10 8-6 0-8-4-8-8z" fill="#ee4f3a"/></g>
<!-- settings -->
<use href="#gear" x="1259" y="1044" width="24" height="24"/>
<!-- terminal -->
<g transform="translate(1303 1045)"><rect width="24" height="21" rx="2" fill="#2f2f2f"/><rect width="24" height="4" fill="#555"/><path d="M4 9l4 3.500L4 16" stroke="#fff" stroke-width="1.600" fill="none"/><path d="M11 16h7" stroke="#fff" stroke-width="1.600"/></g>
<!-- remote -->
<g transform="translate(1347 1044)"><rect x="0" y="8" width="18" height="13" rx="1.500" fill="#0f5fae"/><rect x="7" y="0" width="17" height="14" rx="1.500" fill="#2da5e8"/><rect x="8" y="21" width="2" height="3" fill="#9aa"/><rect x="5" y="24" width="8" height="1" fill="#9aa"/></g>
<!-- screen -->
<g transform="translate(1391 1047)"><rect width="24" height="19" rx="1" fill="#3cb4e8"/><rect x="2" y="2" width="20" height="13" fill="#d8eef8"/><path d="M7 5a3.500 3.500 0 1 0 3.500 3.500H7z" fill="#f0a030"/><path d="M7 5h3.500V8.500H7z" fill="#e05a30"/><path d="M13 4h7M13 7h7M13 10h7M4 13h16" stroke="#1f6fb0"/><rect x="1" y="15.500" width="22" height="2" fill="#0d5c9c"/></g>
<!-- teams -->
<g transform="translate(1434 1043)"><circle cx="10" cy="8" r="4" fill="#7b83eb"/><circle cx="19" cy="10" r="3" fill="#5b5fc7"/><path d="M4 13h12v9c0 2-2 3-5 3s-7-1-7-4z" fill="#7b83eb"/><path d="M15 14h8v6c0 3-2 4-5 4h-4z" fill="#5b5fc7"/><rect x="2" y="12" width="11" height="10" rx="1" fill="#3e409c"/><text x="7.500" y="20.500" text-anchor="middle" font-family="Liberation Sans" font-size="8.500" font-weight="700" fill="#fff">T</text><circle cx="22" cy="6" r="8" fill="#c42b25"/><text x="22" y="10.500" text-anchor="middle" font-family="Liberation Sans" font-size="12" fill="#fff">7</text></g>
<rect x="1431" y="1072" width="32" height="3" rx="1.500" fill="#f89aa6"/>
<!-- help -->
<g transform="translate(1479 1044)"><circle cx="9" cy="9" r="8" fill="#2e9ae0"/><circle cx="15" cy="15" r="9" fill="#0d5ca6"/><path d="M9 22l1 3 4-3" fill="#0d5ca6"/><text x="15" y="20" text-anchor="middle" font-family="Liberation Sans" font-size="13" font-weight="700" fill="#fff">?</text></g>
<!-- chrome -->
<g transform="translate(1523 1044)"><path d="M12 12 1.600 6A12 12 0 0 1 22.400 6z" fill="#e33b2e"/><path d="M12 12 1.600 6A12 12 0 0 0 12 24z" fill="#2fa84f"/><path d="M12 12H22.400A12 12 0 0 1 12 24 L17 15z" fill="#fbc02d"/><path d="M17 6H22.400A12 12 0 0 1 18 22.500L12 12z" fill="#fbc02d"/><circle cx="12" cy="12" r="5.800" fill="#fff"/><circle cx="12" cy="12" r="4.500" fill="#3a7fe8"/></g>
<!-- keychain -->
<g transform="translate(1567 1044)"><rect width="24" height="24" fill="#d6b577"/><path d="M0 0h12L0 12z" fill="#e6cb9a"/><rect x="0" y="9" width="17" height="15" fill="#1560b4"/><rect x="2" y="12" width="13" height="5" fill="#fff"/><path d="M4 14.500h1M7 14.500h1M10 14.500h1" stroke="#222" stroke-width="1.500"/><circle cx="17" cy="5" r="4" fill="#f5c63c"/><rect x="16" y="8" width="2" height="13" fill="#e8b02c"/></g>
<!-- dots -->
<g fill="#8c8478"><rect x="740" y="1072" width="6" height="3" rx="1.500"/><rect x="783" y="1072" width="6" height="3" rx="1.500"/><rect x="828" y="1072" width="6" height="3" rx="1.500"/><rect x="916" y="1072" width="6" height="3" rx="1.500"/><rect x="960" y="1072" width="6" height="3" rx="1.500"/><rect x="1004" y="1072" width="6" height="3" rx="1.500"/><rect x="1048" y="1072" width="6" height="3" rx="1.500"/><rect x="1092" y="1072" width="6" height="3" rx="1.500"/><rect x="1136" y="1072" width="6" height="3" rx="1.500"/><rect x="1224" y="1072" width="6" height="3" rx="1.500"/><rect x="1268" y="1072" width="6" height="3" rx="1.500"/><rect x="1312" y="1072" width="6" height="3" rx="1.500"/><rect x="1356" y="1072" width="6" height="3" rx="1.500"/><rect x="1400" y="1072" width="6" height="3" rx="1.500"/><rect x="1488" y="1072" width="6" height="3" rx="1.500"/><rect x="1532" y="1072" width="6" height="3" rx="1.500"/><rect x="1576" y="1072" width="6" height="3" rx="1.500"/></g>
<!-- tray -->
<g fill="none" stroke-linecap="round" stroke-linejoin="round">
<path d="M1720.500 1059l5-5 5 5" stroke="#fff" stroke-width="1.600"/>
<path d="M1764.500 1049 1751 1058l6 1.500 2 6.500z" stroke="#6ec9e4" stroke-width="1.300"/>
<rect x="1783" y="1050" width="13" height="12" stroke="#fff" stroke-width="1.200"/><rect x="1793" y="1048" width="5" height="8" fill="#3a2c1c" stroke="#fff" stroke-width="1"/><path d="M1789.500 1062v3M1785 1066h9" stroke="#fff" stroke-width="1.200"/>
<path d="M1806 1053h3l4-3.500v13l-4-3.500h-3z" stroke="#fff" stroke-width="1.200"/><path d="M1815.500 1053c1 1.500 1 4.500 0 6M1818 1051c2 2.500 2 7.500 0 10M1820.500 1049c3 3.500 3 10.500 0 14" stroke="#fff" stroke-width="1"/>
</g>
<!-- annotations -->
<rect x="1829" y="1030" width="80" height="47" fill="none" stroke="#e71c1c" stroke-width="4"/>
<path d="M926 341 1806 1019" stroke="#e71c1c" stroke-width="3.800"/>
<path d="M1822 1033 1801 1027 1814 1013z" fill="#e71c1c"/>
</svg>
</div></body></html>
